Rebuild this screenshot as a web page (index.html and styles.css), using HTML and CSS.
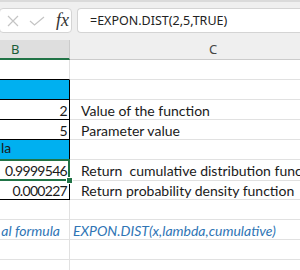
FILE: index.html
```html
<!DOCTYPE html>
<html lang="en">
<head>
  <meta charset="UTF-8">
  <title>EXPON.DIST</title>
  <link rel="stylesheet" href="styles.css">
</head>
<body>

  <div class="formula-bar">
    <div class="fx-box">
      <svg class="icon" width="12" height="12" viewBox="0 0 12 12">
        <path d="M1 1 L11 11 M11 1 L1 11" stroke="#c4c4c4" stroke-width="1.2" fill="none"/>
      </svg>
      <svg class="icon" width="16" height="10" viewBox="0 0 16 10">
        <path d="M1 5 L5.5 9 L15 1" stroke="#c4c4c4" stroke-width="1.2" fill="none"/>
      </svg>
      <span class="fx">fx</span>
    </div>
    <div class="formula-input">=EXPON.DIST(2,5,TRUE)</div>
  </div>

  <div class="sheet">
    <div class="row headers">
      <div class="hdr selected">B</div>
      <div class="hdr">C</div>
    </div>

    <div class="row">
      <div class="cell b top-edge"></div>
      <div class="cell c"></div>
    </div>
    <div class="row">
      <div class="cell b boxed blue"></div>
      <div class="cell c"></div>
    </div>
    <div class="row">
      <div class="cell b boxed num">2</div>
      <div class="cell c">Value of the function</div>
    </div>
    <div class="row">
      <div class="cell b boxed num">5</div>
      <div class="cell c">Parameter value</div>
    </div>
    <div class="row">
      <div class="cell b boxed blue tail">la</div>
      <div class="cell c"></div>
    </div>
    <div class="row">
      <div class="cell b boxed num active">0.9999546</div>
      <div class="cell c">Return &nbsp;cumulative distribution func</div>
    </div>
    <div class="row">
      <div class="cell b boxed num">0.000227</div>
      <div class="cell c">Return probability density function</div>
    </div>
    <div class="row">
      <div class="cell b"></div>
      <div class="cell c"></div>
    </div>
    <div class="row">
      <div class="cell b note right">al formula</div>
      <div class="cell c note">EXPON.DIST(x,lambda,cumulative)</div>
    </div>
    <div class="row">
      <div class="cell b"></div>
      <div class="cell c"></div>
    </div>
    <div class="row">
      <div class="cell b"></div>
      <div class="cell c"></div>
    </div>
  </div>

</body>
</html>
```

FILE: styles.css
```css
body {
  margin: 0;
  width: 300px;
  height: 270px;
  overflow: hidden;
  background: #fff;
  font-family: Lato, "Noto Sans", sans-serif;
}

.formula-bar {
  display: flex;
  gap: 5px;
  height: 40px;
  padding-top: 8px;
  box-sizing: border-box;
  background: #efefef;
  border-top: 2px solid #dadada;
}

.fx-box {
  display: flex;
  align-items: center;
  width: 73px;
  height: 25px;
  margin-left: -1px;
  margin-top: -2px;
  padding-left: 7px;
  box-sizing: border-box;
  background: #fff;
  border: 1px solid #d4d4d4;
  border-radius: 4px;
}

.fx-box .icon {
  margin-right: 10px;
}

.fx {
  font-family: "Liberation Serif", serif;
  font-style: italic;
  font-size: 18px;
  color: #333;
  margin-left: 1px;
}

.formula-input {
  flex: 1;
  height: 25px;
  margin-top: -2px;
  padding-left: 12px;
  box-sizing: border-box;
  background: #fff;
  border: 1px solid #d4d4d4;
  border-right: none;
  border-radius: 4px 0 0 4px;
  font-family: "Noto Sans", sans-serif;
  font-size: 12.5px;
  line-height: 23px;
  color: #222;
  white-space: nowrap;
}

.row {
  display: grid;
  grid-template-columns: 70px 230px;
  height: 20px;
}

.headers .hdr {
  background: #efefef;
  border-bottom: 1px solid #cbcbcb;
  font-family: "Noto Sans", sans-serif;
  font-size: 13px;
  line-height: 19px;
  color: #444;
  padding-left: 139px;
  box-sizing: border-box;
}

.headers .hdr.selected {
  background: #dedede;
  border-bottom: 2px solid #217346;
  border-right: 1px solid #cbcbcb;
  color: #185c37;
  padding-left: 11px;
  line-height: 18px;
}

.cell {
  box-sizing: border-box;
  padding-top: 2px;
  border-right: 1px solid #e1e1e1;
  border-bottom: 1px solid #e1e1e1;
  font-size: 14px;
  line-height: 18px;
  color: #1a1a1a;
  white-space: nowrap;
  overflow: hidden;
}

.cell.c {
  padding-left: 11px;
  border-right: none;
}

.cell.top-edge {
  border-bottom-color: #000;
}

.cell.boxed {
  border-right-color: #000;
  border-bottom-color: #000;
}

.cell.blue {
  background: #00b0f0;
}

.cell.tail {
  padding-top: 0;
  padding-left: 1px;
  line-height: 15px;
}

.cell.num {
  text-align: right;
  padding-right: 2px;
  letter-spacing: -0.7px;
}

.cell.active {
  position: relative;
  overflow: visible;
}

.cell.active::before {
  content: "";
  position: absolute;
  left: -2px;
  top: -1px;
  right: -1px;
  bottom: -1px;
  border: 2px solid #217346;
}

.cell.active::after {
  content: "";
  position: absolute;
  right: -4px;
  bottom: -4px;
  width: 5px;
  height: 5px;
  background: #217346;
  border: 1px solid #fff;
}

.note {
  font-style: italic;
  color: #2f75b5;
}

.cell.right {
  text-align: right;
  padding-right: 9px;
}

.cell.c.note {
  padding-left: 3px;
}
```
